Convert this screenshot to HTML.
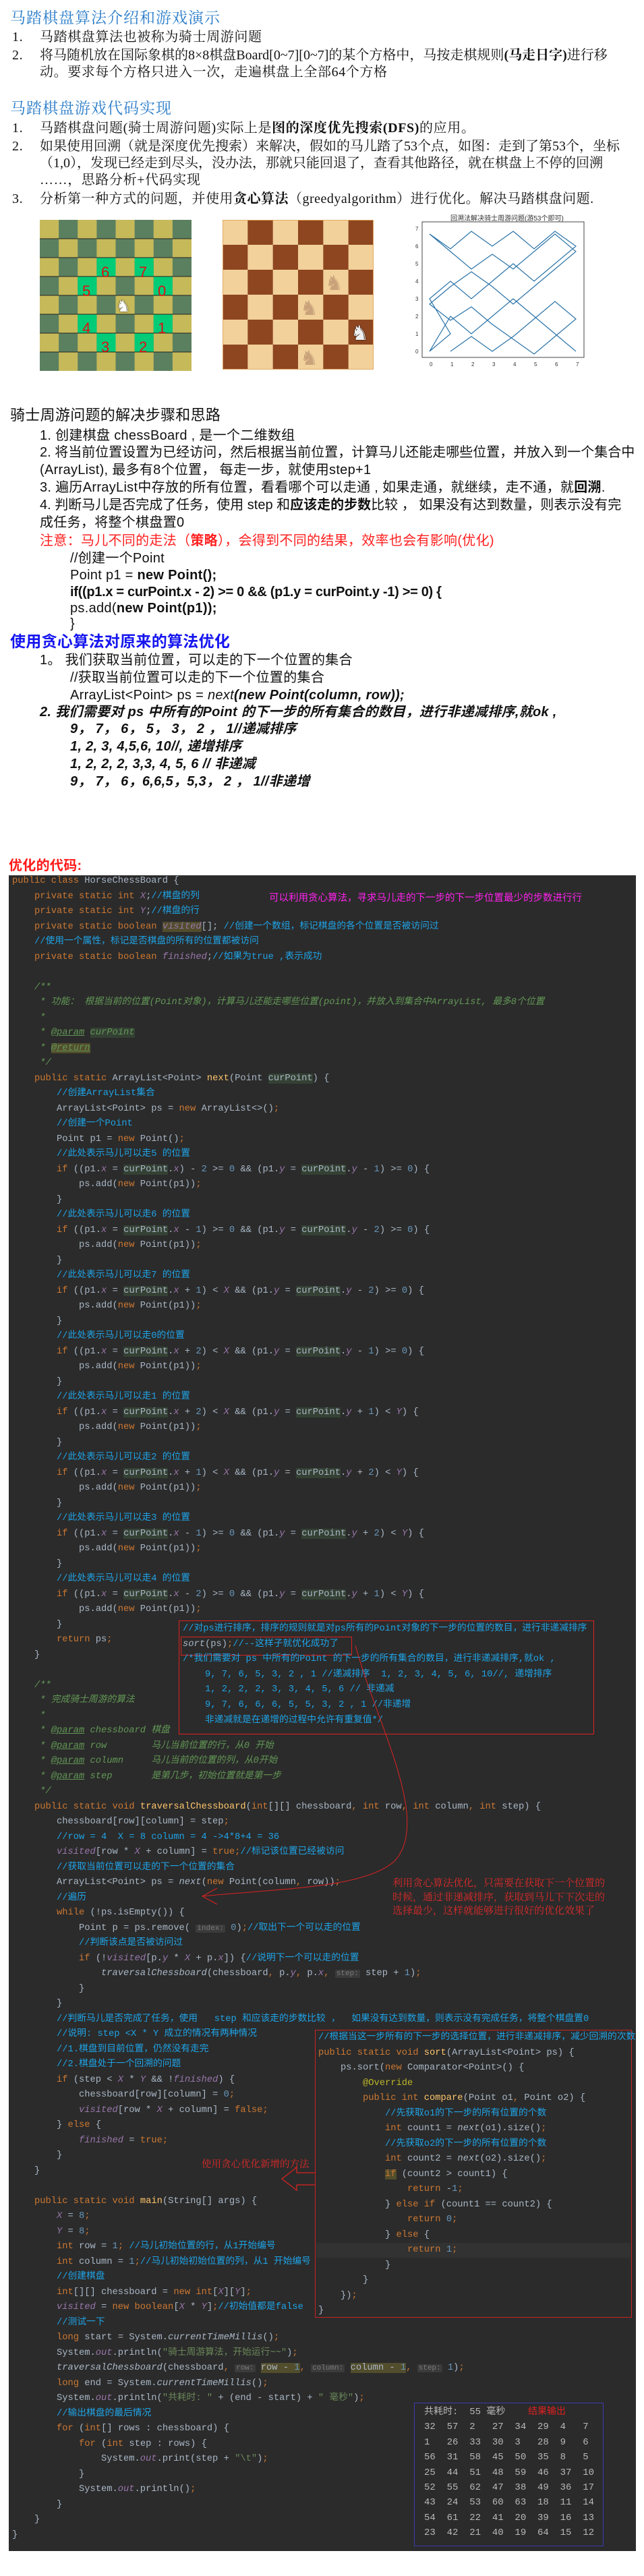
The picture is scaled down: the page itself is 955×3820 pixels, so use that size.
<!DOCTYPE html>
<html><head><meta charset="utf-8">
<style>
*{margin:0;padding:0;box-sizing:border-box}
html,body{width:955px;height:3820px;background:#fff;overflow:hidden}
body{position:relative;font-family:"Liberation Sans","Noto Sans CJK SC",sans-serif;color:#111}
.t{position:absolute;white-space:nowrap;font-size:20px;line-height:20px;font-family:"Liberation Serif","Noto Serif CJK SC",serif;letter-spacing:0.6px}
.h{font-size:23px;line-height:23px;color:#2a7cc9;letter-spacing:1px}
.s2{font-family:"Liberation Sans","Noto Sans CJK SC",sans-serif;letter-spacing:0.3px}
b{font-weight:bold}
#code{position:absolute;left:13px;top:1298px;width:930px;height:2485px;background:#2b2b2b}
pre{font-family:"Liberation Mono","Noto Sans CJK SC",monospace;font-size:13.75px;line-height:22.5px;color:#a9b7c6;white-space:pre}
.k{color:#cc7832}.c{color:#1fa3e6}.d{color:#629755;font-style:italic}.sf{color:#9876aa;font-style:italic}
.m{color:#ffc66d}.n{color:#6897bb}.st{color:#6a8759}.i{font-style:italic}.hl{background:#344134}
.tag{color:#629755;text-decoration:underline;font-style:italic}.an{color:#bbb529}
.hint{background:#3b3b3b;color:#7a7a7a;font-size:11px;padding:0 2px;border-radius:2px}
.yb{background:#524d2c}
.red{color:#e02a2a}
</style></head><body>

<div class="t h" style="left:15px;top:15px">马踏棋盘算法介绍和游戏演示</div>
<div class="t" style="left:18px;top:45px">1.</div><div class="t" style="left:59px;top:45px">马踏棋盘算法也被称为骑士周游问题</div>
<div class="t" style="left:18px;top:72px">2.</div><div class="t" style="left:59px;top:72px;letter-spacing:0px">将马随机放在国际象棋的8×8棋盘Board[0~7][0~7]的某个方格中，马按走棋规则<b>(马走日字)</b>进行移</div>
<div class="t" style="left:59px;top:97px">动。要求每个方格只进入一次，走遍棋盘上全部64个方格</div>

<div class="t h" style="left:15px;top:149px">马踏棋盘游戏代码实现</div>
<div class="t" style="left:18px;top:180px">1.</div><div class="t" style="left:59px;top:180px">马踏棋盘问题(骑士周游问题)实际上是<b>图的深度优先搜索(DFS)</b>的应用。</div>
<div class="t" style="left:18px;top:207px">2.</div><div class="t" style="left:59px;top:207px;letter-spacing:0px">如果使用回溯（就是深度优先搜索）来解决，假如的马儿踏了53个点，如图：走到了第53个，坐标</div>
<div class="t" style="left:59px;top:232px;letter-spacing:0px">（1,0），发现已经走到尽头，没办法，那就只能回退了，查看其他路径，就在棋盘上不停的回溯</div>
<div class="t" style="left:59px;top:257px">……，思路分析+代码实现</div>
<div class="t" style="left:18px;top:285px">3.</div><div class="t" style="left:59px;top:285px;letter-spacing:0.5px">分析第一种方式的问题，并使用<b>贪心算法</b>（greedyalgorithm）进行优化。解决马踏棋盘问题.</div>

<svg style="position:absolute;left:59px;top:326px" width="225" height="224" viewBox="0 0 8 8" preserveAspectRatio="none">
<rect width="8" height="8" fill="#c6b95a"/>
<g fill="#5b8060">
<rect x="1" y="0" width="1" height="1"/><rect x="3" y="0" width="1" height="1"/><rect x="5" y="0" width="1" height="1"/><rect x="7" y="0" width="1" height="1"/>
<rect x="0" y="1" width="1" height="1"/><rect x="2" y="1" width="1" height="1"/><rect x="4" y="1" width="1" height="1"/><rect x="6" y="1" width="1" height="1"/>
<rect x="1" y="2" width="1" height="1"/><rect x="3" y="2" width="1" height="1"/><rect x="5" y="2" width="1" height="1"/><rect x="7" y="2" width="1" height="1"/>
<rect x="0" y="3" width="1" height="1"/><rect x="2" y="3" width="1" height="1"/><rect x="4" y="3" width="1" height="1"/><rect x="6" y="3" width="1" height="1"/>
<rect x="1" y="4" width="1" height="1"/><rect x="3" y="4" width="1" height="1"/><rect x="5" y="4" width="1" height="1"/><rect x="7" y="4" width="1" height="1"/>
<rect x="0" y="5" width="1" height="1"/><rect x="2" y="5" width="1" height="1"/><rect x="4" y="5" width="1" height="1"/><rect x="6" y="5" width="1" height="1"/>
<rect x="1" y="6" width="1" height="1"/><rect x="3" y="6" width="1" height="1"/><rect x="5" y="6" width="1" height="1"/><rect x="7" y="6" width="1" height="1"/>
<rect x="0" y="7" width="1" height="1"/><rect x="2" y="7" width="1" height="1"/><rect x="4" y="7" width="1" height="1"/><rect x="6" y="7" width="1" height="1"/>
</g>
<g fill="#00cc77">
<rect x="3" y="2" width="1" height="1"/><rect x="5" y="2" width="1" height="1"/><rect x="2" y="3" width="1" height="1"/><rect x="6" y="3" width="1" height="1"/>
<rect x="2" y="5" width="1" height="1"/><rect x="6" y="5" width="1" height="1"/><rect x="3" y="6" width="1" height="1"/><rect x="5" y="6" width="1" height="1"/>
</g>
<g stroke="#222" stroke-width="0.04"><path d="M0 1H8M0 2H8M0 3H8M0 4H8M0 5H8M0 6H8M0 7H8"/></g>
</svg>
<div style="position:absolute;left:59px;top:326px;width:225px;height:224px;font-family:'Liberation Sans',sans-serif;color:#e01010;font-size:22px">
<span style="position:absolute;left:91px;top:65px">6</span><span style="position:absolute;left:147px;top:65px">7</span>
<span style="position:absolute;left:63px;top:93px">5</span><span style="position:absolute;left:175px;top:93px">0</span>
<span style="position:absolute;left:63px;top:148px">4</span><span style="position:absolute;left:175px;top:148px">1</span>
<span style="position:absolute;left:91px;top:176px">3</span><span style="position:absolute;left:147px;top:176px">2</span>
<span style="position:absolute;left:113px;top:114px;color:#fff;font-size:24px;text-shadow:0 0 2px #000">♞</span>
</div>

<svg style="position:absolute;left:330px;top:326px" width="224" height="222" viewBox="0 0 6 6" preserveAspectRatio="none">
<rect width="6" height="6" fill="#f2d19b"/>
<g fill="#8e4620">
<rect x="1" y="0" width="1" height="1"/><rect x="3" y="0" width="1" height="1"/><rect x="5" y="0" width="1" height="1"/>
<rect x="0" y="1" width="1" height="1"/><rect x="2" y="1" width="1" height="1"/><rect x="4" y="1" width="1" height="1"/>
<rect x="1" y="2" width="1" height="1"/><rect x="3" y="2" width="1" height="1"/><rect x="5" y="2" width="1" height="1"/>
<rect x="0" y="3" width="1" height="1"/><rect x="2" y="3" width="1" height="1"/><rect x="4" y="3" width="1" height="1"/>
<rect x="1" y="4" width="1" height="1"/><rect x="3" y="4" width="1" height="1"/><rect x="5" y="4" width="1" height="1"/>
<rect x="0" y="5" width="1" height="1"/><rect x="2" y="5" width="1" height="1"/><rect x="4" y="5" width="1" height="1"/>
</g>
<rect width="6" height="6" fill="none" stroke="#e0a860" stroke-width="0.05"/>
</svg>
<div style="position:absolute;left:330px;top:326px;width:224px;height:222px;font-size:30px;line-height:30px">
<span style="position:absolute;left:152px;top:80px;color:#c9a27a">♞</span>
<span style="position:absolute;left:115px;top:117px;color:#c9a27a">♞</span>
<span style="position:absolute;left:190px;top:154px;color:#eee;text-shadow:0 0 2px #000">♞</span>
<span style="position:absolute;left:115px;top:191px;color:#c9a27a">♞</span>
</div>

<div style="position:absolute;left:668px;top:315px;font-size:10px;color:#333;white-space:nowrap">回溯法解决骑士周游问题(游53个即可)</div>
<svg style="position:absolute;left:610px;top:325px" width="265" height="225">
<rect x="16" y="4" width="240" height="201" fill="#fff" stroke="#444" stroke-width="1"/>
<polyline fill="none" stroke="#2a73a8" stroke-width="1.2" points="58,196 89,174 120,196 151,174 182,148 213,122 244,148 213,174 182,200 151,178 120,156 89,130 58,150 27,126 58,100 89,78 120,100 151,126 182,100 213,74 244,48 213,22 182,48 151,74 120,52 89,74 58,48 27,22 58,44 89,18 120,40 151,18 182,44 213,18 244,40 213,66 182,92 151,66 120,92 89,118 58,92 27,118 58,170 27,196 58,144 89,170 120,144 151,118 182,144 213,170 244,196"/>
<g font-size="8" fill="#333" font-family="Liberation Sans">
<text x="27" y="218">0</text><text x="58" y="218">1</text><text x="89" y="218">2</text><text x="120" y="218">3</text><text x="151" y="218">4</text><text x="182" y="218">5</text><text x="213" y="218">6</text><text x="244" y="218">7</text>
<text x="6" y="199">0</text><text x="6" y="173">1</text><text x="6" y="147">2</text><text x="6" y="121">3</text><text x="6" y="95">4</text><text x="6" y="69">5</text><text x="6" y="43">6</text><text x="6" y="17">7</text>
</g>
</svg>

<div class="t s2" style="left:15px;top:605px;font-size:22px;line-height:22px">骑士周游问题的解决步骤和思路</div>
<div class="t s2" style="left:59px;top:636px">1. 创建棋盘 chessBoard , 是一个二维数组</div>
<div class="t s2" style="left:59px;top:661px;letter-spacing:0px">2. 将当前位置设置为已经访问，然后根据当前位置，计算马儿还能走哪些位置，并放入到一个集合中</div>
<div class="t s2" style="left:59px;top:687px">(ArrayList), 最多有8个位置，  每走一步，就使用step+1</div>
<div class="t s2" style="left:59px;top:713px">3. 遍历ArrayList中存放的所有位置，看看哪个可以走通 , 如果走通，就继续，走不通，就<b>回溯</b>.</div>
<div class="t s2" style="left:59px;top:739px;letter-spacing:0px">4. 判断马儿是否完成了任务，使用 step 和<b>应该走的步数</b>比较 ，  如果没有达到数量，则表示没有完</div>
<div class="t s2" style="left:59px;top:765px">成任务，将整个棋盘置0</div>
<div class="t s2" style="left:59px;top:792px;color:#ff2020">注意：马儿不同的走法（<b>策略</b>），会得到不同的结果，效率也会有影响(优化)</div>
<div class="t s2" style="left:104px;top:818px">//创建一个Point</div>
<div class="t s2" style="left:104px;top:843px">Point p1 = <b>new Point();</b></div>
<div class="t s2" style="left:104px;top:868px;font-weight:bold;letter-spacing:-0.3px">if((p1.x = curPoint.x - 2) &gt;= 0 &amp;&amp; (p1.y = curPoint.y -1) &gt;= 0) {</div>
<div class="t s2" style="left:104px;top:892px">ps.add(<b>new Point(p1));</b></div>
<div class="t s2" style="left:104px;top:915px">}</div>
<div class="t s2" style="left:15px;top:940px;font-size:23px;line-height:23px;color:#1515f0;font-weight:bold">使用贪心算法对原来的算法优化</div>
<div class="t s2" style="left:59px;top:969px">1。 我们获取当前位置，可以走的下一个位置的集合</div>
<div class="t s2" style="left:104px;top:995px">//获取当前位置可以走的下一个位置的集合</div>
<div class="t s2" style="left:104px;top:1021px">ArrayList&lt;Point&gt; ps = <i>next</i><b><i>(new Point(column, row));</i></b></div>
<div class="t s2" style="left:59px;top:1046px;font-weight:bold;font-style:italic">2. 我们需要对 ps 中所有的Point 的下一步的所有集合的数目，进行非递减排序,就ok ,</div>
<div class="t s2" style="left:104px;top:1071px;font-weight:bold;font-style:italic">9，  7，  6，  5，  3，  2 ，  1//递减排序</div>
<div class="t s2" style="left:104px;top:1097px;font-weight:bold;font-style:italic">1, 2, 3, 4,5,6, 10//, 递增排序</div>
<div class="t s2" style="left:104px;top:1123px;font-weight:bold;font-style:italic">1, 2, 2, 2, 3,3, 4, 5, 6 // 非递减</div>
<div class="t s2" style="left:104px;top:1149px;font-weight:bold;font-style:italic">9，  7，  6，6,6,5，5,3，  2 ，  1//非递增</div>

<div class="t s2" style="left:13px;top:1274px;color:#ff1a1a;font-weight:bold">优化的代码:</div>

<div id="code"></div>
<pre style="position:absolute;left:18px;top:1296px"><span class="k">public class</span> HorseChessBoard {
    <span class="k">private static int</span> <span class="sf">X</span>;<span class="c">//棋盘的列</span>
    <span class="k">private static int</span> <span class="sf">Y</span>;<span class="c">//棋盘的行</span>
    <span class="k">private static boolean</span> <span class="sf yb">visited</span>[]; <span class="c">//创建一个数组，标记棋盘的各个位置是否被访问过</span>
    <span class="c">//使用一个属性，标记是否棋盘的所有的位置都被访问</span>
    <span class="k">private static boolean</span> <span class="sf">finished</span>;<span class="c">//如果为true ,表示成功</span>

    <span class="d">/**</span>
<span class="d">     * 功能： 根据当前的位置(Point对象)，计算马儿还能走哪些位置(point)，并放入到集合中ArrayList, 最多8个位置</span>
<span class="d">     *</span>
<span class="d">     * <span class="tag">@param</span> <span class="hl">curPoint</span></span>
<span class="d">     * <span class="tag yb">@return</span></span>
<span class="d">     */</span>
    <span class="k">public static</span> ArrayList&lt;Point&gt; <span class="m">next</span>(Point <span class="hl">curPoint</span>) {
        <span class="c">//创建ArrayList集合</span>
        ArrayList&lt;Point&gt; ps = <span class="k">new</span> ArrayList&lt;&gt;()<span class="k">;</span>
        <span class="c">//创建一个Point</span>
        Point p1 = <span class="k">new</span> Point()<span class="k">;</span>
        <span class="c">//此处表示马儿可以走5 的位置</span>
        <span class="k">if</span> ((p1.<span class="sf">x</span> = <span class="hl">curPoint</span>.<span class="sf">x</span>) - <span class="n">2</span> &gt;= <span class="n">0</span> &amp;&amp; (p1.<span class="sf">y</span> = <span class="hl">curPoint</span>.<span class="sf">y</span> - <span class="n">1</span>) &gt;= <span class="n">0</span>) {
            ps.add(<span class="k">new</span> Point(p1))<span class="k">;</span>
        }
        <span class="c">//此处表示马儿可以走6 的位置</span>
        <span class="k">if</span> ((p1.<span class="sf">x</span> = <span class="hl">curPoint</span>.<span class="sf">x</span> - <span class="n">1</span>) &gt;= <span class="n">0</span> &amp;&amp; (p1.<span class="sf">y</span> = <span class="hl">curPoint</span>.<span class="sf">y</span> - <span class="n">2</span>) &gt;= <span class="n">0</span>) {
            ps.add(<span class="k">new</span> Point(p1))<span class="k">;</span>
        }
        <span class="c">//此处表示马儿可以走7 的位置</span>
        <span class="k">if</span> ((p1.<span class="sf">x</span> = <span class="hl">curPoint</span>.<span class="sf">x</span> + <span class="n">1</span>) &lt; <span class="sf">X</span> &amp;&amp; (p1.<span class="sf">y</span> = <span class="hl">curPoint</span>.<span class="sf">y</span> - <span class="n">2</span>) &gt;= <span class="n">0</span>) {
            ps.add(<span class="k">new</span> Point(p1))<span class="k">;</span>
        }
        <span class="c">//此处表示马儿可以走0的位置</span>
        <span class="k">if</span> ((p1.<span class="sf">x</span> = <span class="hl">curPoint</span>.<span class="sf">x</span> + <span class="n">2</span>) &lt; <span class="sf">X</span> &amp;&amp; (p1.<span class="sf">y</span> = <span class="hl">curPoint</span>.<span class="sf">y</span> - <span class="n">1</span>) &gt;= <span class="n">0</span>) {
            ps.add(<span class="k">new</span> Point(p1))<span class="k">;</span>
        }
        <span class="c">//此处表示马儿可以走1 的位置</span>
        <span class="k">if</span> ((p1.<span class="sf">x</span> = <span class="hl">curPoint</span>.<span class="sf">x</span> + <span class="n">2</span>) &lt; <span class="sf">X</span> &amp;&amp; (p1.<span class="sf">y</span> = <span class="hl">curPoint</span>.<span class="sf">y</span> + <span class="n">1</span>) &lt; <span class="sf">Y</span>) {
            ps.add(<span class="k">new</span> Point(p1))<span class="k">;</span>
        }
        <span class="c">//此处表示马儿可以走2 的位置</span>
        <span class="k">if</span> ((p1.<span class="sf">x</span> = <span class="hl">curPoint</span>.<span class="sf">x</span> + <span class="n">1</span>) &lt; <span class="sf">X</span> &amp;&amp; (p1.<span class="sf">y</span> = <span class="hl">curPoint</span>.<span class="sf">y</span> + <span class="n">2</span>) &lt; <span class="sf">Y</span>) {
            ps.add(<span class="k">new</span> Point(p1))<span class="k">;</span>
        }
        <span class="c">//此处表示马儿可以走3 的位置</span>
        <span class="k">if</span> ((p1.<span class="sf">x</span> = <span class="hl">curPoint</span>.<span class="sf">x</span> - <span class="n">1</span>) &gt;= <span class="n">0</span> &amp;&amp; (p1.<span class="sf">y</span> = <span class="hl">curPoint</span>.<span class="sf">y</span> + <span class="n">2</span>) &lt; <span class="sf">Y</span>) {
            ps.add(<span class="k">new</span> Point(p1))<span class="k">;</span>
        }
        <span class="c">//此处表示马儿可以走4 的位置</span>
        <span class="k">if</span> ((p1.<span class="sf">x</span> = <span class="hl">curPoint</span>.<span class="sf">x</span> - <span class="n">2</span>) &gt;= <span class="n">0</span> &amp;&amp; (p1.<span class="sf">y</span> = <span class="hl">curPoint</span>.<span class="sf">y</span> + <span class="n">1</span>) &lt; <span class="sf">Y</span>) {
            ps.add(<span class="k">new</span> Point(p1))<span class="k">;</span>
        }
        <span class="k">return</span> ps<span class="k">;</span>
    }

    <span class="d">/**</span>
<span class="d">     * 完成骑士周游的算法</span>
<span class="d">     *</span>
<span class="d">     * <span class="tag">@param</span> chessboard 棋盘</span>
<span class="d">     * <span class="tag">@param</span> row        马儿当前位置的行，从0 开始</span>
<span class="d">     * <span class="tag">@param</span> column     马儿当前的位置的列，从0开始</span>
<span class="d">     * <span class="tag">@param</span> step       是第几步，初始位置就是第一步</span>
<span class="d">     */</span>
    <span class="k">public static void</span> <span class="m">traversalChessboard</span>(<span class="k">int</span>[][] chessboard<span class="k">, int</span> row<span class="k">, int</span> column<span class="k">, int</span> step) {
        chessboard[row][column] = step<span class="k">;</span>
        <span class="c">//row = 4  X = 8 column = 4 -&gt;4*8+4 = 36</span>
        <span class="sf">visited</span>[row * <span class="sf">X</span> + column] = <span class="k">true;</span><span class="c">//标记该位置已经被访问</span>
        <span class="c">//获取当前位置可以走的下一个位置的集合</span>
        ArrayList&lt;Point&gt; ps = <span class="i">next</span>(<span class="k">new</span> Point(column<span class="k">,</span> row))<span class="k">;</span>
        <span class="c">//遍历</span>
        <span class="k">while</span> (!ps.isEmpty()) {
            Point p = ps.remove( <span class="hint">index:</span> <span class="n">0</span>)<span class="k">;</span><span class="c">//取出下一个可以走的位置</span>
            <span class="c">//判断该点是否被访问过</span>
            <span class="k">if</span> (!<span class="sf">visited</span>[p.<span class="sf">y</span> * <span class="sf">X</span> + p.<span class="sf">x</span>]) {<span class="c">//说明下一个可以走的位置</span>
                <span class="i">traversalChessboard</span>(chessboard<span class="k">,</span> p.<span class="sf">y</span><span class="k">,</span> p.<span class="sf">x</span><span class="k">,</span> <span class="hint">step:</span> step + <span class="n">1</span>)<span class="k">;</span>
            }
        }
        <span class="c">//判断马儿是否完成了任务，使用   step 和应该走的步数比较 ，  如果没有达到数量，则表示没有完成任务，将整个棋盘置0</span>
        <span class="c">//说明: step &lt;X * Y 成立的情况有两种情况</span>
        <span class="c">//1.棋盘到目前位置，仍然没有走完</span>
        <span class="c">//2.棋盘处于一个回溯的问题</span>
        <span class="k">if</span> (step &lt; <span class="sf">X</span> * <span class="sf">Y</span> &amp;&amp; !<span class="sf">finished</span>) {
            chessboard[row][column] = <span class="n">0</span><span class="k">;</span>
            <span class="sf">visited</span>[row * <span class="sf">X</span> + column] = <span class="k">false;</span>
        } <span class="k">else</span> {
            <span class="sf">finished</span> = <span class="k">true;</span>
        }
    }

    <span class="k">public static void</span> <span class="m">main</span>(String[] args) {
        <span class="sf">X</span> = <span class="n">8</span><span class="k">;</span>
        <span class="sf">Y</span> = <span class="n">8</span><span class="k">;</span>
        <span class="k">int</span> row = <span class="n">1</span><span class="k">;</span> <span class="c">//马儿初始位置的行，从1开始编号</span>
        <span class="k">int</span> column = <span class="n">1</span><span class="k">;</span><span class="c">//马儿初始初始位置的列，从1 开始编号</span>
        <span class="c">//创建棋盘</span>
        <span class="k">int</span>[][] chessboard = <span class="k">new int</span>[<span class="sf">X</span>][<span class="sf">Y</span>]<span class="k">;</span>
        <span class="sf">visited</span> = <span class="k">new boolean</span>[<span class="sf">X</span> * <span class="sf">Y</span>]<span class="k">;</span><span class="c">//初始值都是false</span>
        <span class="c">//测试一下</span>
        <span class="k">long</span> start = System.<span class="i">currentTimeMillis</span>()<span class="k">;</span>
        System.<span class="sf">out</span>.println(<span class="st">"骑士周游算法，开始运行~~"</span>)<span class="k">;</span>
        <span class="i">traversalChessboard</span>(chessboard<span class="k">,</span> <span class="hint">row:</span> <span class="yb">row - <span class="n">1</span></span><span class="k">,</span> <span class="hint">column:</span> <span class="yb">column - <span class="n">1</span></span><span class="k">,</span> <span class="hint">step:</span> <span class="n">1</span>)<span class="k">;</span>
        <span class="k">long</span> end = System.<span class="i">currentTimeMillis</span>()<span class="k">;</span>
        System.<span class="sf">out</span>.println(<span class="st">"共耗时: "</span> + (end - start) + <span class="st">" 毫秒"</span>)<span class="k">;</span>
        <span class="c">//输出棋盘的最后情况</span>
        <span class="k">for</span> (<span class="k">int</span>[] rows : chessboard) {
            <span class="k">for</span> (<span class="k">int</span> step : rows) {
                System.<span class="sf">out</span>.print(step + <span class="st">"\t"</span>)<span class="k">;</span>
            }
            System.<span class="sf">out</span>.println()<span class="k">;</span>
        }
    }
}</pre>

<div style="position:absolute;left:399px;top:1320px;color:#ff22ee;font-size:14.5px;white-space:nowrap;font-family:'Noto Sans CJK SC',sans-serif">可以利用贪心算法，寻求马儿走的下一步的下一步位置最少的步数进行行</div>

<div style="position:absolute;left:265px;top:2403px;width:616px;height:169px;border:1.5px solid #d22;background:#2b2b2b"></div>
<div style="position:absolute;left:268px;top:2427px;width:254px;height:28px;border:1.5px solid #d22"></div>
<pre style="position:absolute;left:271px;top:2405px;line-height:22.6px"><span class="c">//对ps进行排序，排序的规则就是对ps所有的Point对象的下一步的位置的数目，进行非递减排序</span>
<span class="i">sort</span>(ps)<span class="k">;</span><span class="c">//--这样子就优化成功了</span>
<span class="c">/*我们需要对 ps 中所有的Point 的下一步的所有集合的数目，进行非递减排序,就ok ,</span>
<span class="c">    9, 7, 6, 5, 3, 2 , 1 //递减排序  1, 2, 3, 4, 5, 6, 10//, 递增排序</span>
<span class="c">    1, 2, 2, 2, 3, 3, 4, 5, 6 // 非递减</span>
<span class="c">    9, 7, 6, 6, 6, 5, 5, 3, 2 , 1 //非递增</span>
<span class="c">    非递减就是在递增的过程中允许有重复值*/</span></pre>

<svg style="position:absolute;left:0;top:0" width="955" height="3820">
<path d="M527 2440 C 560 2560, 640 2700, 585 2760 C 540 2800, 420 2800, 300 2812" fill="none" stroke="#d22" stroke-width="1"/>
<path d="M322 2800 L300 2812 L322 2824" fill="none" stroke="#d22" stroke-width="1"/>
<path d="M467 3222 L440 3222 L440 3214 L418 3231 L440 3248 L440 3240 L467 3240" fill="none" stroke="#d22" stroke-width="1.2"/>
</svg>
<div class="red" style="position:absolute;left:582px;top:2782px;font-size:15px;line-height:20.5px;white-space:nowrap;font-family:'Noto Serif CJK SC',serif">利用贪心算法优化，只需要在获取下一个位置的<br>时候，通过非递减排序，获取到马儿下下次走的<br>选择最少，这样就能够进行很好的优化效果了</div>
<div class="red" style="position:absolute;left:299px;top:3198px;font-size:14.5px;white-space:nowrap;font-family:'Noto Serif CJK SC',serif">使用贪心优化新增的方法</div>

<div style="position:absolute;left:467px;top:3010px;width:470px;height:427px;border:1.5px solid #c22;background:#2b2b2b"></div>
<div style="position:absolute;left:469px;top:3326px;width:466px;height:22px;background:#323232"></div>
<pre style="position:absolute;left:472px;top:3011px"><span class="c">//根据当这一步所有的下一步的选择位置，进行非递减排序，减少回溯的次数</span>
<span class="k">public static void</span> <span class="m">sort</span>(ArrayList&lt;Point&gt; ps) {
    ps.sort(<span class="k">new</span> Comparator&lt;Point&gt;() {
        <span class="an">@Override</span>
        <span class="k">public int</span> <span class="m">compare</span>(Point o1<span class="k">,</span> Point o2) {
            <span class="c">//先获取o1的下一步的所有位置的个数</span>
            <span class="k">int</span> count1 = <span class="i">next</span>(o1).size()<span class="k">;</span>
            <span class="c">//先获取o2的下一步的所有位置的个数</span>
            <span class="k">int</span> count2 = <span class="i">next</span>(o2).size()<span class="k">;</span>
            <span class="k yb">if</span> (count2 &gt; count1) {
                <span class="k">return</span> -<span class="n">1</span><span class="k">;</span>
            } <span class="k">else if</span> (count1 == count2) {
                <span class="k">return</span> <span class="n">0</span><span class="k">;</span>
            } <span class="k">else</span> {
                <span class="k">return</span> <span class="n">1</span><span class="k">;</span>
            }
        }
    })<span class="k">;</span>
}</pre>

<div style="position:absolute;left:614px;top:3563px;width:281px;height:213px;border:1.5px solid #3b3bb0;background:#2b2b2b"></div>
<pre style="position:absolute;left:629px;top:3566px;line-height:22.4px;color:#b8b8b8;font-size:14px">共耗时:  55 毫秒    <span style="color:#e02020">结果输出</span>
32  57  2   27  34  29  4   7
1   26  33  30  3   28  9   6
56  31  58  45  50  35  8   5
25  44  51  48  59  46  37  10
52  55  62  47  38  49  36  17
43  24  53  60  63  18  11  14
54  61  22  41  20  39  16  13
23  42  21  40  19  64  15  12</pre>

</body></html>
